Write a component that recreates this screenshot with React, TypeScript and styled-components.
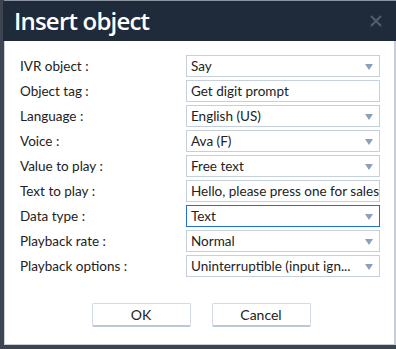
import { styled, createGlobalStyle } from 'styled-components';

const GlobalStyle = createGlobalStyle`
    html, body {
        margin: 0;
        padding: 0;
        background: #3c4550;
        font-family: 'Lato', 'Noto Sans', sans-serif;
    }
`;

type Field = {
    label: string;
    value: string;
    kind: 'select' | 'text';
    focused?: boolean;
};

const fields: Field[] = [
    { label: 'IVR object :', value: 'Say', kind: 'select' },
    { label: 'Object tag :', value: 'Get digit prompt', kind: 'text' },
    { label: 'Language :', value: 'English (US)', kind: 'select' },
    { label: 'Voice :', value: 'Ava (F)', kind: 'select' },
    { label: 'Value to play :', value: 'Free text', kind: 'select' },
    { label: 'Text to play :', value: 'Hello, please press one for sales or two for support', kind: 'text' },
    { label: 'Data type :', value: 'Text', kind: 'select', focused: true },
    { label: 'Playback rate :', value: 'Normal', kind: 'select' },
    { label: 'Playback options :', value: 'Uninterruptible (input ign...', kind: 'select' },
];

const App = () => {
    return (
        <>
            <GlobalStyle />
            <Page>
                <Dialog>
                    <Header>
                        <Title>Insert object</Title>
                        <Close aria-label="close">
                            <svg width="12" height="12" viewBox="0 0 12 12">
                                <path d="M1 1 L11 11 M11 1 L1 11" stroke="#525e6e" strokeWidth="2" />
                            </svg>
                        </Close>
                    </Header>
                    <Body>
                        <Form>
                            {fields.map((f) => (
                                <Row key={f.label}>
                                    <Label>{f.label}</Label>
                                    <Box $focused={f.focused}>
                                        <Value>{f.value}</Value>
                                        {f.kind === 'select' && <Arrow />}
                                    </Box>
                                </Row>
                            ))}
                        </Form>
                        <Footer>
                            <Button>OK</Button>
                            <Button>Cancel</Button>
                        </Footer>
                    </Body>
                </Dialog>
            </Page>
        </>
    );
};

export default App;

const Page = styled.div`
    width: 396px;
    height: 349px;
    overflow: hidden;
    padding: 0 0 0 4px;
    box-sizing: border-box;
`;

const Dialog = styled.div`
    width: 392px;
    border-top: 1px solid #8a939e;
    display: flex;
    flex-direction: column;
`;

const Header = styled.div`
    height: 40px;
    margin-left: -1px;
    width: 394px;
    background: #1f2a3b;
    display: flex;
    align-items: center;
    justify-content: space-between;
    padding: 0 15px 0 11px;
    box-sizing: border-box;
`;

const Title = styled.h1`
    margin: 0;
    color: #ffffff;
    font-family: 'Open Sans', sans-serif;
    font-weight: 600;
    font-size: 24px;
    letter-spacing: -0.8px;
    line-height: 40px;
`;

const Close = styled.div`
    display: flex;
    align-items: center;
    margin-top: -1px;
`;

const Body = styled.div`
    background: #ffffff;
    border-left: 1px solid #c9d3e3;
    border-right: 2px solid #c9ced6;
    border-bottom: 1px solid #c9ced6;
    padding: 14px 12px 17px 15px;
    box-sizing: border-box;
    height: 304px;
`;

const Form = styled.div`
    display: flex;
    flex-direction: column;
    gap: 3px;
`;

const Row = styled.div`
    display: grid;
    grid-template-columns: 166px 194px;
    align-items: center;
    height: 22px;
`;

const Label = styled.span`
    font-size: 13.5px;
    color: #222;
`;

const Box = styled.div<{ $focused?: boolean }>`
    position: relative;
    height: 22px;
    box-sizing: border-box;
    border: 1px solid ${({ $focused }) => ($focused ? '#1d6fd1' : '#c6d0dd')};
    display: flex;
    align-items: center;
    padding: 0 6px 0 4px;
    overflow: hidden;
`;

const Value = styled.span`
    font-size: 13.5px;
    color: #222;
    white-space: nowrap;
`;

const Arrow = styled.span`
    position: absolute;
    right: 6px;
    top: 8px;
    width: 0;
    height: 0;
    border-left: 4px solid transparent;
    border-right: 4px solid transparent;
    border-top: 6px solid #8aa0bd;
`;

const Footer = styled.div`
    display: flex;
    justify-content: center;
    gap: 21px;
    margin-top: 26px;
`;

const Button = styled.button`
    width: 99px;
    height: 24px;
    background: #ffffff;
    border: 1px solid #d3dae3;
    border-bottom: 2px solid #b9c7d9;
    border-radius: 2px;
    font-family: 'Lato', 'Noto Sans', sans-serif;
    font-size: 14px;
    color: #222;
    cursor: pointer;
    padding: 0;
`;
